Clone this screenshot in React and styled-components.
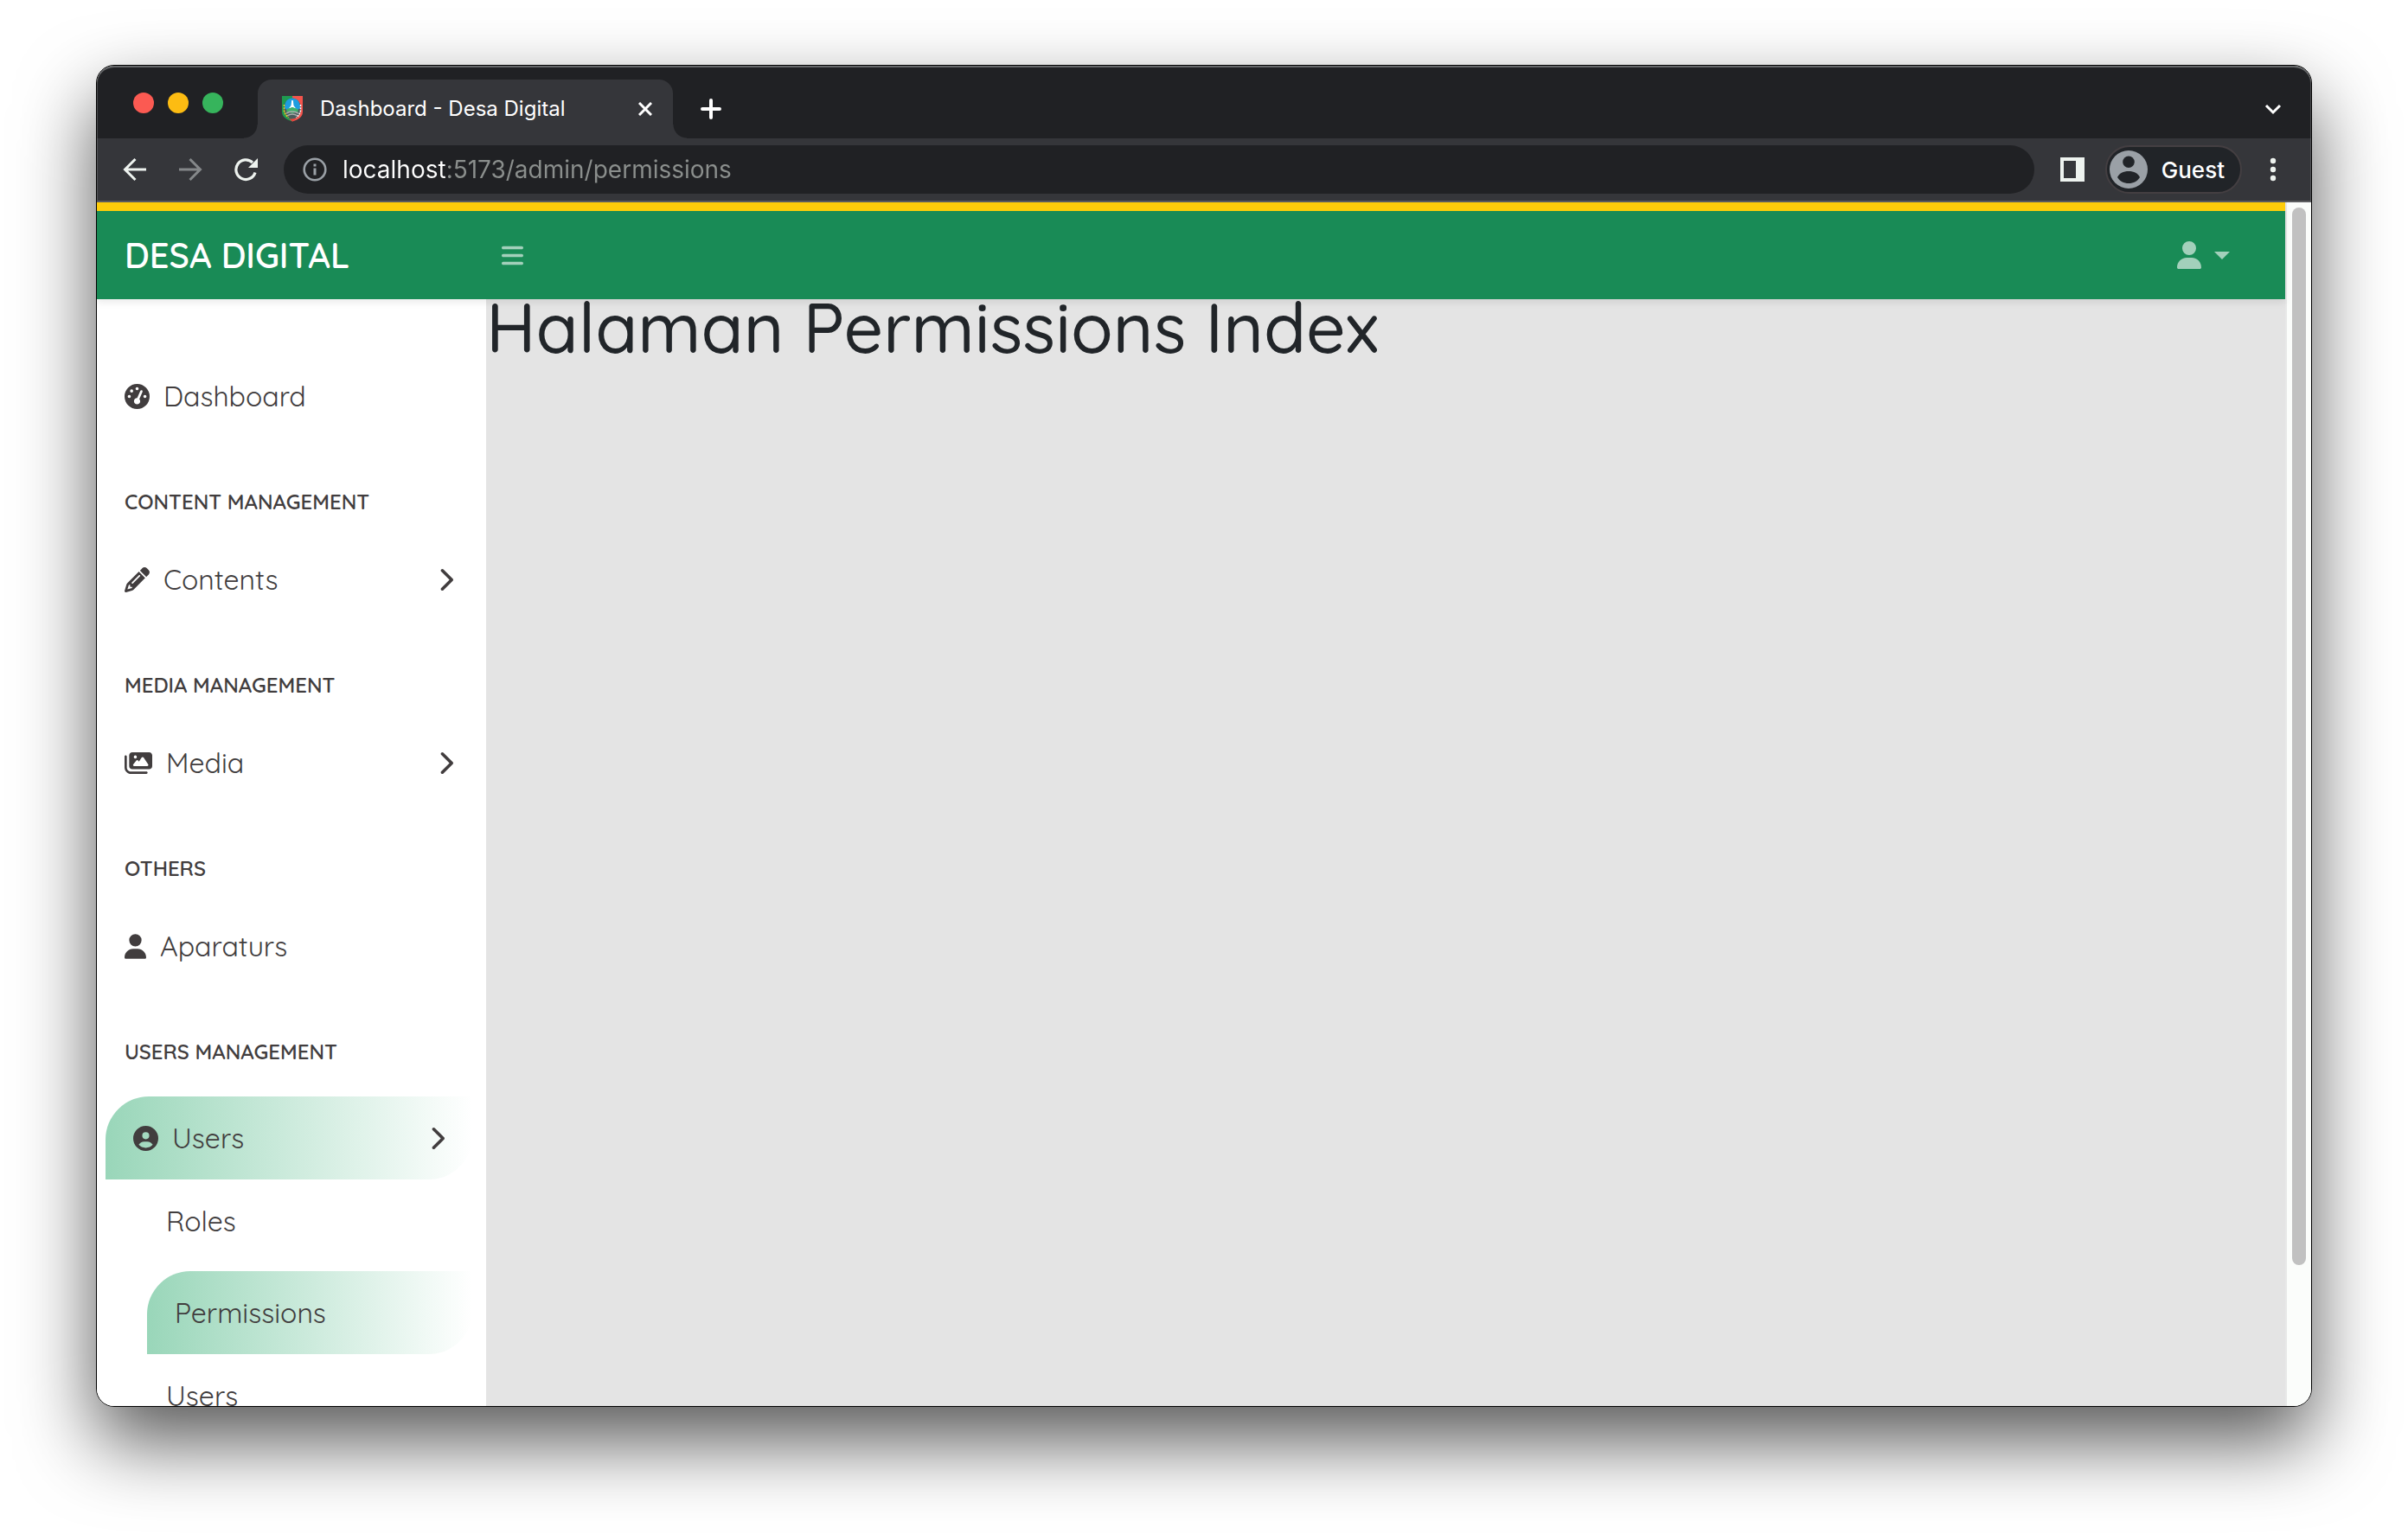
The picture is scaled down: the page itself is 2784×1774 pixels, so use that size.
import React from 'react';
import styled, { createGlobalStyle, css } from 'styled-components';
import {
  FaBars,
  FaChevronRight,
  FaCircleUser,
  FaGaugeHigh,
  FaImages,
  FaPencil,
  FaUser,
} from 'react-icons/fa6';

const color = {
  frame: '#202124',
  toolbar: '#35363a',
  muted: '#8b8f8d',
  icon: '#eef3ef',
  green: '#198b56',
  yellow: '#ffcd0a',
  ink: '#413d3e',
  canvas: '#e4e4e4',
};

const GlobalStyle = createGlobalStyle`
  * { box-sizing: border-box; }
  body {
    margin: 0;
    background: #fff;
    font-family: Quicksand, Nunito, sans-serif;
    color: ${color.ink};
  }
  ul { list-style: none; margin: 0; padding: 0; }
  button, input { font: inherit; color: inherit; }
  button { background: none; border: 0; padding: 0; cursor: pointer; }
  a { color: inherit; text-decoration: none; }
  svg { display: block; flex: none; }
`;

const Desktop = styled.div`
  display: flex;
  height: 100vh;
  padding: 75px 111px 147px;
  overflow: hidden;
`;

const Window = styled.div`
  flex: 1;
  min-width: 0;
  display: flex;
  flex-direction: column;
  overflow: hidden;
  border: 1px solid #000;
  border-radius: 21px;
  background: #fff;
  box-shadow: 0 40px 88px rgba(0, 0, 0, 0.66);
`;

/* Browser chrome */

const TabStrip = styled.div`
  flex: none;
  display: flex;
  height: 84px;
  padding: 16px 34px 0 42px;
  border-radius: 20px 20px 0 0;
  background: ${color.frame};
  box-shadow: inset 0 2px 0 #66686a, inset 1px 0 0 #4a4b4e, inset -1px 0 0 #4a4b4e;
  color: #fff;
  font-family: Inter, Roboto, sans-serif;
`;

const Lights = styled.div`
  display: flex;
  align-items: center;
  gap: 16px;
  padding-bottom: 14px;
  margin-right: 40px;
`;

const Light = styled.button`
  width: 24px;
  height: 24px;
  border-radius: 50%;
  background: ${(p) => p.$fill};
`;

const Tab = styled.div`
  position: relative;
  display: flex;
  align-items: center;
  gap: 20px;
  width: 480px;
  padding: 0 24px 0 28px;
  border-radius: 16px 16px 0 0;
  background: ${color.toolbar};

  &::before,
  &::after {
    content: '';
    position: absolute;
    bottom: 0;
    width: 16px;
    height: 16px;
  }
  &::before {
    right: 100%;
    background: radial-gradient(circle at 0 0, transparent 15px, ${color.toolbar} 16px);
  }
  &::after {
    left: 100%;
    background: radial-gradient(circle at 100% 0, transparent 15px, ${color.toolbar} 16px);
  }
`;

const TabTitle = styled.span`
  flex: 1;
  font-size: 24px;
  line-height: 32px;
  white-space: nowrap;
`;

const StripButton = styled.button`
  display: flex;
  align-items: center;
  margin-left: ${(p) => (p.$end ? 'auto' : p.$gap || '0')};
`;

const Toolbar = styled.div`
  flex: none;
  display: flex;
  align-items: center;
  height: 74px;
  padding: 0 40px 0 30px;
  border-bottom: 2px solid #5c5d60;
  background: ${color.toolbar};
  box-shadow: inset 1px 0 0 #55565a, inset -1px 0 0 #55565a;
  color: #fff;
  font-family: Inter, Roboto, sans-serif;
`;

const NavButtons = styled.div`
  display: flex;
  gap: 36px;
  margin-right: 30px;
`;

const Address = styled.label`
  flex: 1;
  display: flex;
  align-items: center;
  gap: 18px;
  height: 56px;
  padding: 0 22px;
  border-radius: 28px;
  background: ${color.frame};
`;

/* The host part is white, the rest of the address is grey. */
const AddressInput = styled.input`
  flex: 1;
  min-width: 0;
  height: 40px;
  padding: 0;
  border: 0;
  outline: 0;
  font-size: 28px;
  color: #fff;
  background: linear-gradient(to right, #fff 120px, ${color.muted} 120px);
  background-clip: text;
  -webkit-background-clip: text;
  -webkit-text-fill-color: transparent;
`;

const ToolbarActions = styled.div`
  display: flex;
  align-items: center;
  gap: 24px;
  margin-left: 30px;
`;

const Profile = styled.button`
  display: flex;
  align-items: center;
  gap: 16px;
  height: 56px;
  padding: 0 18px 0 3px;
  margin-right: 8px;
  border: 2px solid #443f42;
  border-radius: 28px;
  background: #212428;
  font-size: 26px;
  font-weight: 500;
`;

/* Web page */

const Viewport = styled.div`
  flex: 1;
  min-height: 0;
  display: flex;
`;

const Page = styled.div`
  flex: 1;
  min-width: 0;
  display: flex;
  flex-direction: column;
`;

const Scrollbar = styled.div`
  flex: none;
  width: 30px;
  padding: 6px;
  border-left: 2px solid #e8e8e8;
  background: #fbfdfb;
`;

const Thumb = styled.div`
  width: 16px;
  height: 88.6%;
  border-radius: 8px;
  background: #c1c1c1;
`;

const Navbar = styled.header`
  flex: none;
  position: relative;
  display: flex;
  align-items: center;
  height: 112px;
  padding: 0 64px 0 32px;
  border-top: 10px solid ${color.yellow};
  background: ${color.green};
  box-shadow: 0 4px 8px rgba(0, 0, 0, 0.08);
  color: rgba(255, 255, 255, 0.6);
`;

const Brand = styled.a`
  width: 436px;
  font-size: 40px;
  font-weight: 600;
  line-height: 60px;
  color: #fff;
`;

const UserMenu = styled.button`
  display: flex;
  align-items: center;
  gap: 15px;
  margin-left: auto;

  &::after {
    content: '';
    border: 9px solid transparent;
    border-top-color: currentColor;
    border-bottom: 0;
  }
`;

const Body = styled.div`
  flex: 1;
  min-height: 0;
  display: flex;
`;

const Sidebar = styled.nav`
  flex: none;
  width: 450px;
  padding: 64px 6px 0 0;
  overflow: hidden;
  background: #fff;
`;

const SectionTitle = styled.h2`
  margin: 0;
  padding: 56px 32px 24px;
  font-size: 24px;
  font-weight: 600;
  line-height: 36px;
  text-transform: uppercase;
`;

const SubMenu = styled.ul`
  && { padding-left: 48px; }
`;

const itemStyle = css`
  display: flex;
  align-items: center;
  gap: 16px;
  width: 100%;
  padding: 24px 32px;
  font-size: 32px;
  line-height: 48px;
  text-align: left;

  ${(p) =>
    p.$active &&
    css`
      width: auto;
      margin: 10px 10px 0;
      border-radius: 50px 0;
      background: linear-gradient(to right, #99d6b9, #fff);
    `}
`;

const ItemLink = styled.a`
  ${itemStyle}
`;

const ItemButton = styled.button`
  && {
    ${itemStyle}
    ${(p) => p.$active && 'width: calc(100% - 20px);'}
  }
`;

const ItemText = styled.span`
  flex: 1;
`;

const Glyph = styled.span`
  display: flex;
  svg {
    width: ${(p) => p.$width || 29}px;
    height: ${(p) => p.$height || 29}px;
  }
`;

const Main = styled.main`
  flex: 1;
  min-width: 0;
  background: ${color.canvas};
`;

const PageTitle = styled.h1`
  margin: 0;
  font-size: 80px;
  font-weight: 500;
  line-height: 64px;
  color: #212529;
`;

function Crest() {
  return (
    <svg width="24" height="30" viewBox="0 0 24 30" aria-hidden="true">
      <path d="M0 0h12v29.500C4 27 0 24 0 18z" fill="#1f9a50" />
      <path d="M12 0h12v18c0 6-4 9-12 11.500z" fill="#f4544c" />
      <ellipse cx="12" cy="14.500" rx="10" ry="12" fill="#4a5a5c" />
      <path d="M3 14C3 6 7 2.500 12 2.500S21 6 21 14l-4 3H7z" fill="#1d9de0" />
      <path d="M11.200 5h1.600l.7 6 3 4-4.500-2-4.500 2 3-4z" fill="#fff" />
      <path d="M6 15l6-2 6 2 1 3-7 2-7-2z" fill="#3fb16a" />
      <path d="M5 20q7-4 14 0M6 23q6-4 12 0" fill="none" stroke="#a9adad" strokeWidth="1.500" />
      <path d="M2.500 10v7q1 5 5 8" fill="none" stroke="#f2d21b" strokeWidth="1.500" strokeDasharray="2 1.200" />
      <path d="M21.500 10v7q-1 5-5 8" fill="none" stroke="#fff" strokeWidth="1.500" strokeDasharray="2 1.200" />
      <path d="M8 26.500h8l-4 3z" fill="#e2403c" />
    </svg>
  );
}

function Stroke({ size, height = size, width = 3.5, cap = 'butt', stroke = 'currentColor', d }) {
  return (
    <svg width={size} height={height} viewBox={`0 0 ${size} ${height}`} fill="none" stroke={stroke} strokeWidth={width} strokeLinecap={cap} aria-hidden="true">
      <path d={d} />
    </svg>
  );
}

function Reload() {
  return (
    <svg width="28" height="28" viewBox="0 0 28 28" aria-hidden="true">
      <path d="M25 17.500A11.300 11.300 0 1 1 22 6" fill="none" stroke={color.icon} strokeWidth="3.200" />
      <path d="M28 1v11H17z" fill={color.icon} />
    </svg>
  );
}

function Info() {
  return (
    <svg width="28" height="28" viewBox="0 0 28 28" aria-hidden="true">
      <circle cx="14" cy="14" r="12.300" fill="none" stroke="#9aa0a6" strokeWidth="2.600" />
      <path d="M12.500 12.500h3v8h-3zM12.500 7.500h3v3h-3z" fill="#9aa0a6" />
    </svg>
  );
}

function SidePanelIcon() {
  return (
    <svg width="28" height="28" viewBox="0 0 28 28" aria-hidden="true">
      <path fillRule="evenodd" d="M0 0h28v28H0zM4 4v20h14V4z" fill={color.icon} />
    </svg>
  );
}

function Avatar() {
  return (
    <svg width="44" height="44" viewBox="0 0 44 44" aria-hidden="true">
      <circle cx="22" cy="22" r="22" fill="#9aa0a6" />
      <circle cx="22" cy="13.300" r="6.800" fill="#212428" />
      <path d="M9 31c2-4.500 7-7 13-7s11 2.500 13 7c-2.500 4.500-7.500 7-13 7S11.500 35.500 9 31z" fill="#212428" />
    </svg>
  );
}

function Dots() {
  return (
    <svg width="8" height="28" viewBox="0 0 8 28" fill={color.icon} aria-hidden="true">
      <circle cx="4" cy="4" r="3.200" />
      <circle cx="4" cy="14" r="3.200" />
      <circle cx="4" cy="24" r="3.200" />
    </svg>
  );
}

function Item({ icon: Icon, iconWidth, label, active, expandable }) {
  const content = (
    <>
      {Icon && (
        <Glyph $width={iconWidth}>
          <Icon />
        </Glyph>
      )}
      <ItemText>{label}</ItemText>
      {expandable && (
        <Glyph $width={18}>
          <FaChevronRight />
        </Glyph>
      )}
    </>
  );
  return expandable ? (
    <ItemButton type="button" $active={active} aria-expanded={!!active}>
      {content}
    </ItemButton>
  ) : (
    <ItemLink href="#" $active={active}>
      {content}
    </ItemLink>
  );
}

const sections = [
  { items: [{ icon: FaGaugeHigh, label: 'Dashboard' }] },
  { title: 'Content Management', items: [{ icon: FaPencil, label: 'Contents', expandable: true }] },
  { title: 'Media Management', items: [{ icon: FaImages, iconWidth: 32, label: 'Media', expandable: true }] },
  { title: 'Others', items: [{ icon: FaUser, iconWidth: 25, label: 'Aparaturs' }] },
  {
    title: 'Users Management',
    items: [
      {
        icon: FaCircleUser,
        label: 'Users',
        expandable: true,
        active: true,
        children: [{ label: 'Roles' }, { label: 'Permissions', active: true }, { label: 'Users' }],
      },
    ],
  },
];

function BrowserChrome() {
  return (
    <>
      <TabStrip>
        <Lights>
          <Light type="button" aria-label="Close window" $fill="#fb5a52" />
          <Light type="button" aria-label="Minimize window" $fill="#fdbc12" />
          <Light type="button" aria-label="Zoom window" $fill="#36b45c" />
        </Lights>
        <Tab>
          <Crest />
          <TabTitle>Dashboard - Desa Digital</TabTitle>
          <StripButton type="button" aria-label="Close tab">
            <Stroke size={16} width={3} d="M1 1l14 14M15 1L1 15" />
          </StripButton>
        </Tab>
        <StripButton type="button" aria-label="New tab" $gap="32px">
          <Stroke size={24} width={4} cap="round" d="M12 2v20M2 12h20" />
        </StripButton>
        <StripButton type="button" aria-label="Search tabs" $end>
          <Stroke size={20} height={14} width={3} d="M2 3l8 8 8-8" />
        </StripButton>
      </TabStrip>
      <Toolbar>
        <NavButtons>
          <button type="button" aria-label="Back">
            <Stroke size={28} width={3} stroke={color.icon} d="M27 14H3M14.500 2L2.500 14l12 12" />
          </button>
          <button type="button" aria-label="Forward">
            <Stroke size={28} width={3} stroke="#85888a" d="M1 14h24M13.500 2l12 12-12 12" />
          </button>
          <button type="button" aria-label="Reload">
            <Reload />
          </button>
        </NavButtons>
        <Address>
          <Info />
          <AddressInput aria-label="Address" defaultValue="localhost:5173/admin/permissions" spellCheck={false} />
        </Address>
        <ToolbarActions>
          <button type="button" aria-label="Side panel">
            <SidePanelIcon />
          </button>
          <Profile type="button">
            <Avatar />
            Guest
          </Profile>
          <button type="button" aria-label="Browser menu">
            <Dots />
          </button>
        </ToolbarActions>
      </Toolbar>
    </>
  );
}

export default function App() {
  return (
    <>
      <GlobalStyle />
      <Desktop>
        <Window>
          <BrowserChrome />
          <Viewport>
            <Page>
              <Navbar>
                <Brand href="#">DESA DIGITAL</Brand>
                <button type="button" aria-label="Toggle sidebar">
                  <Glyph $width={25}>
                    <FaBars />
                  </Glyph>
                </button>
                <UserMenu type="button" aria-label="Account">
                  <Glyph $width={28} $height={32}>
                    <FaUser />
                  </Glyph>
                </UserMenu>
              </Navbar>
              <Body>
                <Sidebar>
                  {sections.map((section) => (
                    <section key={section.title || 'home'}>
                      {section.title && <SectionTitle>{section.title}</SectionTitle>}
                      <ul>
                        {section.items.map(({ children, ...item }) => (
                          <li key={item.label}>
                            <Item {...item} />
                            {children && (
                              <SubMenu>
                                {children.map((child) => (
                                  <li key={child.label}>
                                    <Item {...child} />
                                  </li>
                                ))}
                              </SubMenu>
                            )}
                          </li>
                        ))}
                      </ul>
                    </section>
                  ))}
                </Sidebar>
                <Main>
                  <PageTitle>Halaman Permissions Index</PageTitle>
                </Main>
              </Body>
            </Page>
            <Scrollbar>
              <Thumb />
            </Scrollbar>
          </Viewport>
        </Window>
      </Desktop>
    </>
  );
}
